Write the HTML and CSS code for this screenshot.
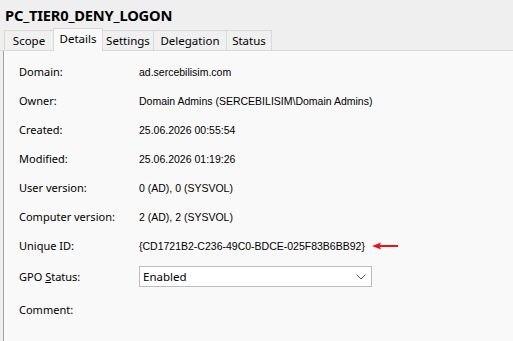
FILE: index.html
```html
<!DOCTYPE html>
<html>
<head>
<meta charset="utf-8">
<link rel="stylesheet" href="styles.css">
</head>
<body>
<div class="window">
  <div class="title">PC_TIER0_DENY_LOGON</div>
  <div class="tabs">
    <div class="tab tab-scope">Scope</div>
    <div class="tab tab-details active">Details</div>
    <div class="tab tab-settings">Settings</div>
    <div class="tab tab-delegation">Delegation</div>
    <div class="tab tab-status">Status</div>
  </div>
  <div class="panel">
    <div class="row"><div class="label">Domain:</div><div class="value">ad.sercebilisim.com</div></div>
    <div class="row"><div class="label">Owner:</div><div class="value">Domain Admins (SERCEBILISIM\Domain Admins)</div></div>
    <div class="row"><div class="label">Created:</div><div class="value">25.06.2026 00:55:54</div></div>
    <div class="row"><div class="label">Modified:</div><div class="value">25.06.2026 01:19:26</div></div>
    <div class="row"><div class="label">User version:</div><div class="value">0 (AD), 0 (SYSVOL)</div></div>
    <div class="row"><div class="label">Computer version:</div><div class="value">2 (AD), 2 (SYSVOL)</div></div>
    <div class="row"><div class="label">Unique ID:</div><div class="value">{CD1721B2-C236-49C0-BDCE-025F83B6BB92}<svg class="arrow" width="26" height="8" viewBox="0 0 26 8"><path d="M0 4 L9 0.5 L8 3 L26 3 L26 5 L8 5 L9 7.5 Z" fill="#e8141b"/></svg></div></div>
    <div class="row combo-row"><div class="label">GPO <u>S</u>tatus:</div>
      <div class="combo"><span>Enabled</span><svg width="10" height="6" viewBox="0 0 10 6"><path d="M0.5 0.5 L5 5 L9.5 0.5" fill="none" stroke="#555" stroke-width="1"/></svg></div>
    </div>
    <div class="row comment"><div class="label">Comment:</div></div>
  </div>
</div>
</body>
</html>
```
FILE: styles.css
```css
html, body { margin: 0; padding: 0; }
body {
  width: 513px;
  height: 341px;
  overflow: hidden;
  background: #efefef;
  font-family: "Noto Sans", "Liberation Sans", sans-serif;
  color: #000;
}
.window { display: flex; flex-direction: column; height: 341px; }
.title {
  font-weight: bold;
  font-size: 14.7px;
  padding: 5px 0 0 5px;
  height: 23px;
  letter-spacing: -0.2px;
}
.tabs {
  display: flex;
  align-items: flex-end;
  padding-left: 4px;
  height: 22px;
  border-bottom: 1px solid #d9d9d9;
}
.tab {
  font-size: 11.5px;
  height: 20px;
  line-height: 20px;
  text-align: center;
  border: 1px solid #d9d9d9;
  border-bottom: none;
  margin-right: -1px;
  background: #f0f0f0;
  box-sizing: border-box;
}
.tab-scope { width: 50px; }
.tab-details { width: 50px; }
.tab-settings { width: 52px; }
.tab-delegation { width: 74px; }
.tab-status { width: 46px; }
.tab.active {
  height: 23px;
  line-height: 19px;
  background: #f9f9f9;
  position: relative;
  margin-bottom: -1px;
  z-index: 1;
}
.panel {
  flex: 1;
  background: #f9f9f9;
  margin-left: 3px;
  border-left: 1px solid #a0a0a0;
  padding: 6px 0 0 15px;
}
.row {
  display: flex;
  align-items: center;
  height: 29px;
}
.label {
  font-size: 11px;
  width: 120px;
  flex: none;
}
.value {
  font-family: "Liberation Sans", sans-serif;
  font-size: 10.5px;
  display: flex;
  align-items: center;
}
.arrow { margin-left: 7px; }
.combo-row { height: 31px; padding-top: 1px; }
.combo {
  width: 233px;
  height: 21px;
  box-sizing: border-box;
  background: #fff;
  border: 1px solid #bdbdbd;
  display: flex;
  align-items: center;
  justify-content: space-between;
  padding: 0 5px 0 3px;
  font-family: "Noto Sans", sans-serif;
  font-size: 11.5px;
}
.comment { height: 34px; }
```
